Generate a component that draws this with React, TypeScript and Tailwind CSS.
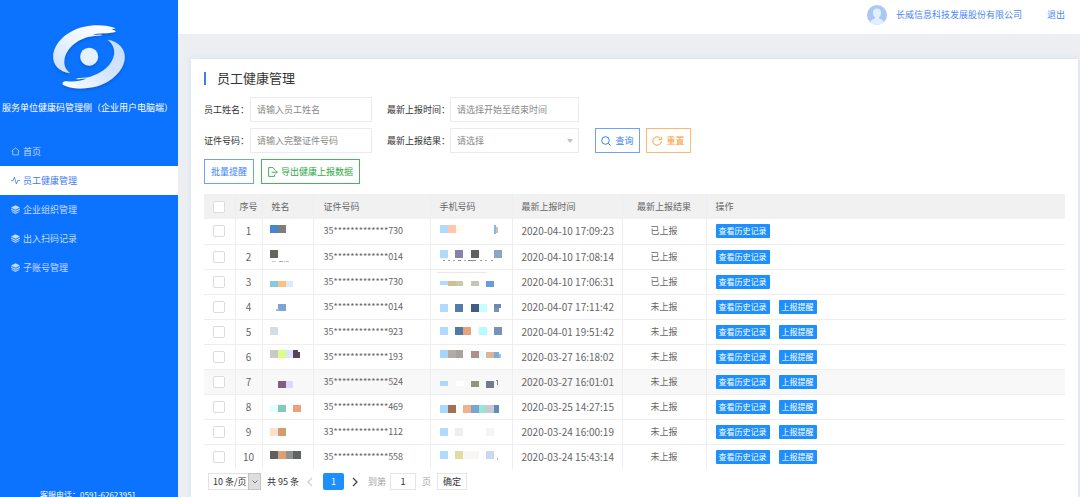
import React from 'react';

type Block = [x: number, y: number, w: number, h: number, color: string];

interface Employee {
  id: string;
  time: string;
  reported: boolean;
  name: Block[];
  phone: Block[];
}

const employees: Employee[] = [
  {
    id: '35*************730', time: '2020-04-10 17:09:23', reported: true,
    name: [[0, 6, 8, 8, '#4587cc'], [8, 6, 8, 8, '#7f7c7c']],
    phone: [[0, 6, 8, 8, '#b0dbff'], [8, 6, 8, 8, '#ffc6ad'], [16, 6, 8, 8, '#fffdf2'], [54, 6, 2, 9, '#8fb6df'], [56, 8, 2, 6, '#c2c2c2']],
  },
  {
    id: '35*************014', time: '2020-04-10 17:08:14', reported: true,
    name: [[0, 5, 8, 8, '#64665a'], [2, 16, 4, 1, '#c8c8c8'], [9, 16, 4, 1, '#aaaaaa'], [14, 16, 5, 1, '#c8c8c8']],
    phone: [
      [0, 5, 8, 8, '#b0dbff'], [15, 5, 8, 8, '#8a80ad'], [31, 5, 8, 8, '#5f6062'], [54, 5, 8, 8, '#8ba5c6'],
      [3, 15, 2, 1, '#999999'], [8, 15, 2, 1, '#999999'], [13, 15, 2, 1, '#aaaaaa'], [18, 15, 3, 1, '#888888'],
      [24, 15, 2, 1, '#aaaaaa'], [28, 15, 8, 1, '#888888'], [40, 15, 2, 1, '#999999'], [45, 15, 2, 1, '#aaaaaa'], [51, 15, 2, 1, '#999999'],
    ],
  },
  {
    id: '35*************730', time: '2020-04-10 17:06:31', reported: true,
    name: [[0, 11, 8, 6, '#84cbe0'], [8, 11, 8, 6, '#fbc184'], [16, 11, 7, 6, '#dfe9fc']],
    phone: [[-3, 2, 49, 1, '#f3e5df'], [0, 11, 8, 4, '#b0dbff'], [8, 11, 8, 5, '#d4bb91'], [16, 11, 7, 5, '#cbcbab'], [31, 11, 8, 5, '#c6c4b4'], [46, 11, 8, 6, '#669edc']],
  },
  {
    id: '35*************014', time: '2020-04-07 17:11:42', reported: false,
    name: [[8, 9, 8, 7, '#7da5dc'], [6, 14, 3, 2, '#a7bad7']],
    phone: [[0, 9, 8, 8, '#b0dbff'], [15, 9, 8, 8, '#537cac'], [31, 9, 8, 8, '#425f82'], [39, 9, 8, 8, '#ccfcff'], [54, 9, 7, 4, '#6d8bb0'], [54, 13, 5, 4, '#7793b5']],
  },
  {
    id: '35*************923', time: '2020-04-01 19:51:42', reported: false,
    name: [[0, 7, 8, 8, '#d5dce4']],
    phone: [[0, 7, 8, 8, '#b0dbff'], [15, 7, 8, 8, '#527aa6'], [23, 7, 8, 8, '#e7a37f'], [39, 7, 8, 8, '#b6fbff'], [54, 7, 8, 8, '#7793b9']],
  },
  {
    id: '35*************193', time: '2020-03-27 16:18:02', reported: false,
    name: [[0, 5, 8, 8, '#c9c9c9'], [8, 5, 8, 8, '#dcff89'], [16, 5, 7, 8, '#dae3ff'], [23, 5, 5, 8, '#56415a'], [28, 7, 2, 6, '#56415a']],
    phone: [[0, 5, 8, 8, '#a6d6ff'], [8, 5, 8, 8, '#b4a9a4'], [16, 5, 7, 8, '#a3a59d'], [31, 6, 8, 7, '#aa9087'], [39, 6, 5, 7, '#e6fbff'], [46, 7, 8, 6, '#dbb696'], [54, 7, 5, 6, '#7cacdc'], [59, 9, 2, 4, '#9ac5e8']],
  },
  {
    id: '35*************524', time: '2020-03-27 16:01:01', reported: false,
    name: [[8, 11, 8, 7, '#806082'], [16, 11, 7, 7, '#ddd8ff']],
    phone: [[0, 11, 8, 5, '#afd6ff'], [16, 11, 8, 5, '#ffffff'], [31, 11, 8, 6, '#90967a'], [46, 11, 8, 7, '#747b8b'], [56, 10, 2, 1, '#888888'], [57, 11, 1, 4, '#888888']],
  },
  {
    id: '35*************469', time: '2020-03-25 14:27:15', reported: false,
    name: [[0, 10, 8, 7, '#e3ffff'], [8, 10, 8, 7, '#84cabc'], [23, 10, 8, 7, '#ef9f7c']],
    phone: [[0, 10, 8, 8, '#a9d8ff'], [8, 10, 8, 8, '#a37054'], [23, 10, 8, 8, '#efb28c'], [31, 10, 8, 8, '#7aa4d3'], [39, 10, 7, 8, '#9ce5d4'], [46, 10, 8, 8, '#c9c9d5'], [54, 10, 5, 8, '#6389b7']],
  },
  {
    id: '33*************112', time: '2020-03-24 16:00:19', reported: false,
    name: [[0, 8, 8, 8, '#fbe1cd'], [8, 8, 8, 8, '#d29b71']],
    phone: [[0, 8, 8, 8, '#b0dbff'], [15, 8, 8, 8, '#eeeeee'], [46, 8, 8, 8, '#f5f5f5']],
  },
  {
    id: '35*************558', time: '2020-03-24 15:43:14', reported: false,
    name: [[0, 6, 8, 8, '#606060'], [8, 6, 8, 8, '#dba076'], [16, 6, 7, 8, '#8e9190'], [23, 6, 8, 8, '#616263']],
    phone: [[0, 6, 8, 8, '#b0dbff'], [15, 6, 8, 8, '#e0dda2'], [23, 6, 16, 8, '#f8f7f5'], [46, 6, 8, 8, '#c9d9ef'], [57, 13, 1, 2, '#c0c0c0']],
  },
];

const Mosaic: React.FC<{ blocks: Block[] }> = ({ blocks }) => (
  <svg width="64" height="24" className="block overflow-visible" aria-hidden="true">
    {blocks.map(([x, y, w, h, color], index) => (
      <rect key={index} x={x} y={y} width={w} height={h} fill={color} />
    ))}
  </svg>
);

const Logo = () => (
  <svg viewBox="150 65 230 210" className="w-[77px] h-[70px]" aria-hidden="true">
    <defs>
      <linearGradient id="wingTop" x1="1" y1="0" x2="0" y2="1">
        <stop offset="0" stopColor="#ffffff" />
        <stop offset="0.5" stopColor="#eef5ff" />
        <stop offset="1" stopColor="#c6deff" />
      </linearGradient>
      <linearGradient id="wingBottom" x1="1" y1="0" x2="0" y2="1">
        <stop offset="0" stopColor="#c4dcff" />
        <stop offset="0.5" stopColor="#d5e6ff" />
        <stop offset="1" stopColor="#ffffff" />
      </linearGradient>
      <filter id="logoShadow" x="-20%" y="-20%" width="140%" height="150%">
        <feDropShadow dx="0" dy="5" stdDeviation="5" floodColor="#0046b4" floodOpacity="0.5" />
      </filter>
    </defs>
    <g filter="url(#logoShadow)">
      <path
        fill="url(#wingTop)"
        d="M343 84C318 74 280 72 246 80C196 92 158 128 156 168C155 194 174 215 207 219C193 208 187 194 190 177C195 145 230 114 272 108C284 106 296 107 304 104C292 103 283 104 272 105C288 96 322 101 343 95C345 91 340 89 330 88Z"
      />
      <path
        fill="url(#wingBottom)"
        d="M319 118C352 123 372 144 371 172C369 211 329 248 279 260C243 268 204 264 185 253C182 247 187 242 199 243C219 245 242 242 257 234C247 235 236 238 223 236C236 230 250 234 267 229C304 218 335 193 339 162C341 144 334 129 319 118Z"
      />
      <circle cx="264" cy="169" r="27" fill="#e6f0ff" />
    </g>
  </svg>
);

const HomeIcon = () => (
  <svg viewBox="0 0 16 16" className="w-[9px] h-[9px]" fill="none" stroke="currentColor" strokeWidth="1.3" aria-hidden="true">
    <path d="M1 7.500 8 1.500l7 6M3 6.500V14h10V6.500" />
  </svg>
);

const PulseIcon = () => (
  <svg viewBox="0 0 16 16" className="w-[9px] h-[9px]" fill="none" stroke="currentColor" strokeWidth="1.4" aria-hidden="true">
    <path d="M0 8.500h3.500L6 2l3.500 12L12 8h4" />
  </svg>
);

const LayersIcon = () => (
  <svg viewBox="0 0 16 16" className="w-[9px] h-[9px]" fill="currentColor" aria-hidden="true">
    <path d="M8 0.500 16 4.500 8 8.500 0 4.500ZM0 6.200 8 10.200 16 6.200V8.400L8 12.400 0 8.400ZM1 10.500 8 13.800 15 10.500V12L8 15.800 1 12Z" />
  </svg>
);

const menu = [
  { label: '首页', icon: <HomeIcon />, active: false },
  { label: '员工健康管理', icon: <PulseIcon />, active: true },
  { label: '企业组织管理', icon: <LayersIcon />, active: false },
  { label: '出入扫码记录', icon: <LayersIcon />, active: false },
  { label: '子账号管理', icon: <LayersIcon />, active: false },
];

const Sidebar: React.FC = () => (
  <aside className="w-[178px] shrink-0 h-full flex flex-col bg-[#0b73ff] text-white">
    <div className="flex justify-center pt-[22px]">
      <Logo />
    </div>
    <h1 className="mt-2 pl-0.5 leading-4 whitespace-nowrap">服务单位健康码管理侧（企业用户电脑端）</h1>
    <nav className="mt-[21px]">
      {menu.map((item) => (
        <a
          key={item.label}
          href="#"
          className={
            item.active
              ? 'flex items-center gap-[3px] h-[29px] pl-[11px] bg-white text-[#3f7bf5]'
              : 'flex items-center gap-[3px] h-[29px] pl-[11px] text-[#c3dcff]'
          }
        >
          {item.icon}
          <span>{item.label}</span>
        </a>
      ))}
    </nav>
    <p className="mt-auto h-2 pl-10 text-[8px] leading-3 whitespace-nowrap">客服电话：0591-62623951</p>
  </aside>
);

const Header: React.FC = () => (
  <header className="h-[34px] shrink-0 flex items-center justify-end bg-white pr-[15px] pb-1 text-[#4b86f5]">
    <svg viewBox="0 0 20 20" className="w-5 h-5 mr-[9px]" aria-hidden="true">
      <clipPath id="avatar"><circle cx="10" cy="10" r="10" /></clipPath>
      <g clipPath="url(#avatar)">
        <rect width="20" height="20" fill="#a9c8f3" />
        <path d="M10 3.500c2.600 0 4 1.800 4 4.300 0 2-1 3.700-2 4.500v1.200c2.500.8 5 1.500 5.500 6.500h-15c.5-5 3-5.700 5.500-6.500v-1.200c-1-.8-2-2.500-2-4.500 0-2.500 1.400-4.300 4-4.300Z" fill="#e3effd" />
      </g>
    </svg>
    <span>长威信息科技发展股份有限公司</span>
    <a href="#" className="ml-[25px]">退出</a>
  </header>
);

const inputClass = 'h-[25px] border border-[#ebebeb] bg-white px-1.5 text-[#666] placeholder:text-[#8a8a8a] outline-none';

const Filters: React.FC = () => (
  <form className="mt-[11px] flex flex-col gap-1.5 text-[#333]" onSubmit={(e) => e.preventDefault()}>
    <div className="flex items-center">
      <label htmlFor="name" className="w-[46px]">员工姓名：</label>
      <input id="name" className={`${inputClass} w-[122px]`} placeholder="请输入员工姓名" />
      <label htmlFor="time" className="ml-[15px] w-[63px]">最新上报时间：</label>
      <input id="time" className={`${inputClass} w-[129px]`} placeholder="请选择开始至结束时间" />
    </div>
    <div className="flex items-center">
      <label htmlFor="card" className="w-[46px]">证件号码：</label>
      <input id="card" className={`${inputClass} w-[122px]`} placeholder="请输入完整证件号码" />
      <label htmlFor="result" className="ml-[15px] w-[63px]">最新上报结果：</label>
      <div className="relative w-[129px]">
        <select id="result" className="w-full h-[25px] appearance-none border border-[#ebebeb] bg-white px-1.5 text-[#8a8a8a] outline-none">
          <option>请选择</option>
          <option>已上报</option>
          <option>未上报</option>
        </select>
        <svg viewBox="0 0 6 4" className="absolute right-1.5 top-[11px] w-1.5 h-1 pointer-events-none" aria-hidden="true">
          <path d="M0 0h6L3 4Z" fill="#c2c2c2" />
        </svg>
      </div>
      <button type="submit" className="ml-4 w-[45px] h-[25px] flex items-center justify-center gap-1 border border-[#6ea1ff] text-[#3b82f6]">
        <svg viewBox="0 0 10 10" className="w-2.5 h-2.5" fill="none" stroke="currentColor" aria-hidden="true">
          <circle cx="4.500" cy="4.500" r="3.800" />
          <path d="M7.200 7.200 9.500 9.500" />
        </svg>
        查询
      </button>
      <button type="reset" className="ml-1.5 w-[45px] h-[25px] flex items-center justify-center gap-1 border border-[#ffb870] text-[#ff9a2e]">
        <svg viewBox="0 0 10 10" className="w-2.5 h-2.5" fill="none" stroke="currentColor" aria-hidden="true">
          <path d="M9.200 5.200A4.200 4.200 0 1 1 7.800 1.900M9.300 0.800V3.500H6.500" />
        </svg>
        重置
      </button>
    </div>
    <div className="flex gap-[7px]">
      <button type="button" className="w-[50px] h-[25px] border border-[#6ea1ff] text-[#3b82f6]">批量提醒</button>
      <button type="button" className="w-[99px] h-[25px] flex items-center justify-center gap-[3px] border border-[#4db35a] text-[#2fa83f]">
        <svg viewBox="0 0 10 10" className="w-2.5 h-2.5" fill="none" stroke="currentColor" strokeWidth="0.9" aria-hidden="true">
          <path d="M6.500 3V2.200L5 0.600H0.600V9.400H6.500V7.500M3.500 5.200H9M7.500 3.500 9.300 5.200 7.500 6.900" />
        </svg>
        导出健康上报数据
      </button>
    </div>
  </form>
);

const checkClass = 'block mx-auto w-3 h-3 appearance-none rounded-xs border border-[#dcdcdc] bg-white';
const cell = 'border-r border-[#eeeeee]';
const tagClass = 'h-3.5 rounded-[1px] bg-[#1e8fff] px-[3px] text-[8px] leading-3.5 text-white';

const EmployeeTable: React.FC = () => (
  <table className="mt-[10px] w-full table-fixed border-collapse text-left text-[#666]">
    <colgroup>
      <col className="w-[31px]" />
      <col className="w-[27px]" />
      <col className="w-[51px]" />
      <col className="w-[117px]" />
      <col className="w-[82px]" />
      <col className="w-[110px]" />
      <col className="w-[84px]" />
      <col />
    </colgroup>
    <thead>
      <tr className="h-[25px] bg-[#f1f1f1] [&>th]:font-normal">
        <th className={cell}><input type="checkbox" aria-label="全选" className={checkClass} /></th>
        <th className={`${cell} text-center`}>序号</th>
        <th className={`${cell} pl-[9px]`}>姓名</th>
        <th className={`${cell} pl-2.5`}>证件号码</th>
        <th className={`${cell} pl-[9px]`}>手机号码</th>
        <th className={`${cell} pl-[9px]`}>最新上报时间</th>
        <th className={`${cell} text-center`}>最新上报结果</th>
        <th className="pl-[9px]">操作</th>
      </tr>
    </thead>
    <tbody>
      {employees.map((row, index) => (
        <tr key={index} className={index === 6 ? 'h-[25px] border-b border-[#eeeeee] bg-[#f8f8f8]' : 'h-[25px] border-b border-[#eeeeee] last:border-b-0'}>
          <td className={cell}><input type="checkbox" aria-label={`选择 ${index + 1}`} className={checkClass} /></td>
          <td className={`${cell} text-center text-[10px]`}>{index + 1}</td>
          <td className={`${cell} pl-[7px]`}><Mosaic blocks={row.name} /></td>
          <td className={`${cell} pl-2.5`}>{row.id}</td>
          <td className={`${cell} pl-[9px]`}><Mosaic blocks={row.phone} /></td>
          <td className={`${cell} pl-[9px] text-[10px] whitespace-nowrap`}>{row.time}</td>
          <td className={`${cell} text-center`}>{row.reported ? '已上报' : '未上报'}</td>
          <td className="pl-[9px]">
            <div className="flex gap-[9px]">
              <button type="button" className={tagClass}>查看历史记录</button>
              {!row.reported && <button type="button" className={tagClass}>上报提醒</button>}
            </div>
          </td>
        </tr>
      ))}
    </tbody>
  </table>
);

const Chevron: React.FC<{ d: string; className: string }> = ({ d, className }) => (
  <svg viewBox="0 0 6 10" className={`w-1.5 h-2.5 ${className}`} fill="none" stroke="currentColor" strokeWidth="1.3" aria-hidden="true">
    <path d={d} />
  </svg>
);

const Pagination: React.FC = () => (
  <div className="mt-1 ml-1 flex items-center text-[#333]">
    <div className="relative w-[53px]">
      <select aria-label="每页条数" className="w-full h-[17px] appearance-none border border-[#e2e2e2] bg-white pl-1 leading-3 outline-none">
        <option>10 条/页</option>
        <option>20 条/页</option>
      </select>
      <span className="absolute right-0 top-0 w-[13px] h-[17px] flex items-center justify-center border border-[#c4c4c4] bg-[#dedede] pointer-events-none">
        <svg viewBox="0 0 6 4" className="w-1.5 h-1" fill="none" stroke="#777" aria-hidden="true">
          <path d="M0.500 0.500 3 3 5.500 0.500" />
        </svg>
      </span>
    </div>
    <span className="ml-1.5 w-10">共 95 条</span>
    <button type="button" aria-label="上一页"><Chevron d="M5 1 1 5l4 4" className="text-[#cfcfcf]" /></button>
    <button type="button" className="ml-2.5 w-[21px] h-[17px] rounded-xs bg-[#1e8fff] text-white">1</button>
    <button type="button" aria-label="下一页" className="ml-2"><Chevron d="m1 1 4 4-4 4" className="text-[#444]" /></button>
    <label htmlFor="page" className="ml-2.5 text-[#a5a5a5]">到第</label>
    <input id="page" defaultValue="1" className="mx-1 w-[26px] h-[17px] border border-[#e6e6e6] text-center outline-none" />
    <span className="ml-0.5 text-[#a5a5a5]">页</span>
    <button type="button" className="ml-1.5 w-[30px] h-[17px] border border-[#e6e6e6]">确定</button>
  </div>
);

const App: React.FC = () => (
  <div className="h-screen flex overflow-hidden bg-[#eceef2] font-['Noto_Sans_CJK_SC',sans-serif] text-[9px] leading-3">
    <Sidebar />
    <div className="flex-1 min-w-0 flex flex-col">
      <Header />
      <main className="flex-1 mt-[25px] ml-[13px] mr-0.5 px-[13px] pt-[11px] bg-white shadow-[0_0_5px_#cfdff5]">
        <h2 className="flex items-center gap-[11px] h-4 text-[13px] leading-4 text-[#333]">
          <span className="w-0.5 h-[13px] bg-[#3f7bf5]" />
          员工健康管理
        </h2>
        <Filters />
        <EmployeeTable />
        <Pagination />
      </main>
    </div>
  </div>
);

export default App;
